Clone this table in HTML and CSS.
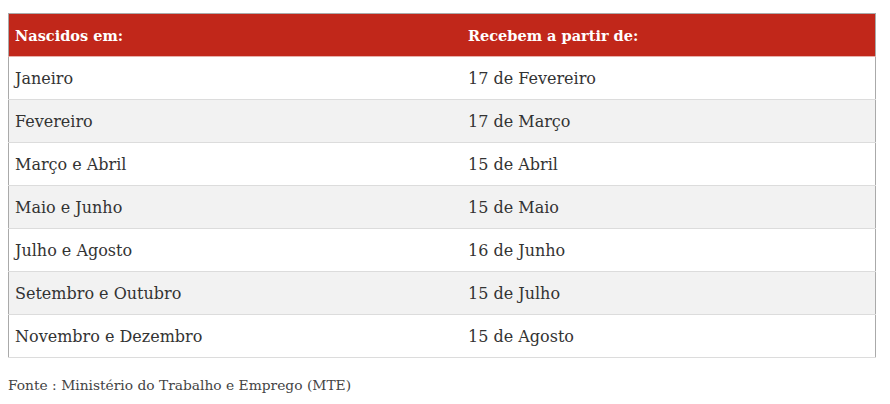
FILE: index.html
```html
<!DOCTYPE html>
<html lang="pt">
<head>
<meta charset="utf-8">
<link rel="stylesheet" href="styles.css">
</head>
<body>
<div class="wrap">
<table class="tbl">
<thead>
<tr><th class="c1">Nascidos em:</th><th>Recebem a partir de:</th></tr>
</thead>
<tbody>
<tr><td>Janeiro</td><td>17 de Fevereiro</td></tr>
<tr><td>Fevereiro</td><td>17 de Março</td></tr>
<tr><td>Março e Abril</td><td>15 de Abril</td></tr>
<tr><td>Maio e Junho</td><td>15 de Maio</td></tr>
<tr><td>Julho e Agosto</td><td>16 de Junho</td></tr>
<tr><td>Setembro e Outubro</td><td>15 de Julho</td></tr>
<tr><td>Novembro e Dezembro</td><td>15 de Agosto</td></tr>
</tbody>
</table>
<p class="src">Fonte : Ministério do Trabalho e Emprego (MTE)</p>
</div>
</body>
</html>
```
FILE: styles.css
```css
html, body { margin: 0; padding: 0; background: #fff; }
body { font-family: "DejaVu Serif", serif; color: #333; }
.wrap { padding: 13px 8px 0 8px; }
.tbl {
  width: 868px;
  border-collapse: collapse;
  border: 1px solid #aaa;
  font-size: 16px;
}
.tbl th {
  background: #c1271a;
  color: #fff;
  text-align: left;
  font-weight: bold;
  font-size: 14.5px;
  height: 42px;
  padding: 0 6px;
  border-bottom: 1px solid #e8b0aa;
}
.tbl th.c1 { width: 441px; }
.tbl td {
  height: 42px;
  padding: 0 6px;
  border-bottom: 1px solid #dcdcdc;
}
.tbl tbody tr:nth-child(even) td { background: #f2f2f2; }
.src {
  margin: 19px 0 0 0;
  font-size: 13.8px;
  color: #444;
}
```
